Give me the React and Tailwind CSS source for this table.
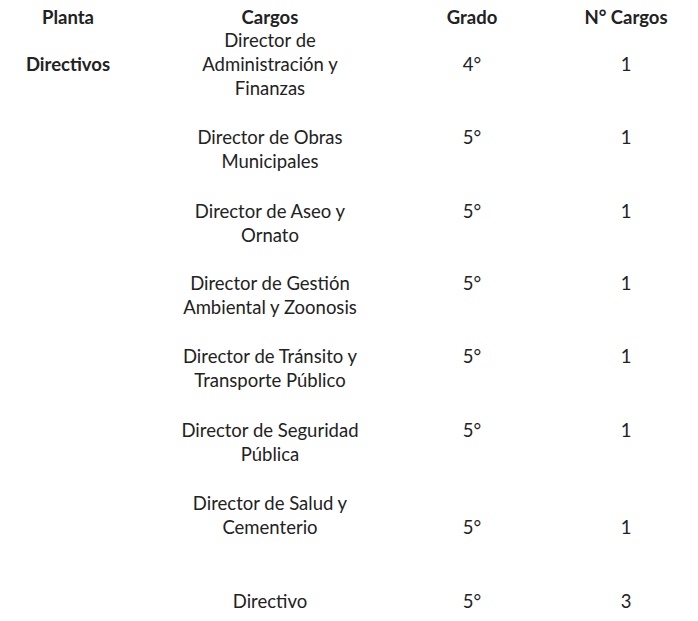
import React from "react";

const rows = [
  { planta: "Directivos", cargo: ["Director de", "Administración y", "Finanzas"], grado: "4°", n: "1", valLine: 1, gap: "mt-0" },
  { cargo: ["Director de Obras", "Municipales"], grado: "5°", n: "1", valLine: 0, gap: "mt-[25px]" },
  { cargo: ["Director de Aseo y", "Ornato"], grado: "5°", n: "1", valLine: 0, gap: "mt-[26px]" },
  { cargo: ["Director de Gestión", "Ambiental y Zoonosis"], grado: "5°", n: "1", valLine: 0, gap: "mt-[24px]" },
  { cargo: ["Director de Tránsito y", "Transporte Público"], grado: "5°", n: "1", valLine: 0, gap: "mt-[25px]" },
  { cargo: ["Director de Seguridad", "Pública"], grado: "5°", n: "1", valLine: 0, gap: "mt-[26px]" },
  { cargo: ["Director de Salud y", "Cementerio"], grado: "5°", n: "1", valLine: 1, gap: "mt-[25px]" },
  { cargo: ["Directivo"], grado: "5°", n: "3", valLine: 0, gap: "mt-[50px]" },
];

function Cell({ className, lines, text, line }) {
  return (
    <div className={className}>
      {lines
        ? lines.map((l, i) => <div key={i}>{l}</div>)
        : [...Array(line)].map((_, i) => <div key={i}>&nbsp;</div>).concat(<div key="t">{text}</div>)}
    </div>
  );
}

export default function App() {
  return (
    <div
      className="w-[698px] h-[621px] bg-white text-[#222222] text-[18.5px] leading-[24px] pt-[5px] overflow-hidden"
      style={{ fontFamily: "Lato, 'Open Sans', sans-serif" }}
    >
      <div className="flex font-bold h-[23px]">
        <div className="w-[136px] text-center">Planta</div>
        <div className="w-[268px] text-center">Cargos</div>
        <div className="w-[136px] text-center">Grado</div>
        <div className="w-[140px] ml-[16px] text-center">N° Cargos</div>
      </div>
      {rows.map((r, i) => (
        <div key={i} className={`flex ${r.gap}`}>
          <Cell className="w-[136px] text-center font-bold" text={r.planta || ""} line={r.planta ? 1 : 0} />
          <Cell className="w-[268px] text-center" lines={r.cargo} />
          <Cell className="w-[136px] text-center" text={r.grado} line={r.valLine} />
          <Cell className="w-[140px] ml-[16px] text-center" text={r.n} line={r.valLine} />
        </div>
      ))}
    </div>
  );
}
